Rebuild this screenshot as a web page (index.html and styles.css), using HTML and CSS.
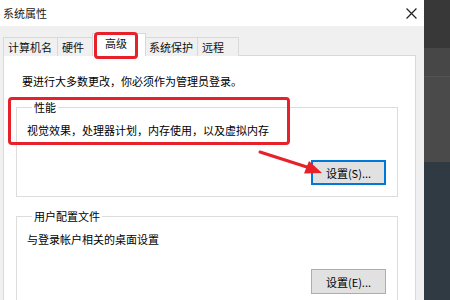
FILE: index.html
```html
<!DOCTYPE html>
<html lang="zh-CN">
<head>
<meta charset="UTF-8" />
<title>系统属性</title>
<link rel="stylesheet" href="styles.css">
</head>
<body>
  <div class="dialog">
    <div class="titlebar">
      <span class="title">系统属性</span>
      <svg class="close" viewBox="0 0 10 10" width="11" height="11">
        <path d="M0.5 0.5 L9.5 9.5 M9.5 0.5 L0.5 9.5" stroke="#222" stroke-width="1.1" fill="none"/>
      </svg>
    </div>

    <div class="tabs">
      <div class="tab">计算机名</div>
      <div class="tab">硬件</div>
      <div class="tab active">高级</div>
      <div class="tab">系统保护</div>
      <div class="tab">远程</div>
    </div>

    <div class="panel">
      <p class="notice">要进行大多数更改，你必须作为管理员登录。</p>

      <fieldset class="group">
        <legend>性能</legend>
        <p class="desc">视觉效果，处理器计划，内存使用，以及虚拟内存</p>
        <div class="actions"><button class="btn focused">设置(S)...</button></div>
      </fieldset>

      <fieldset class="group">
        <legend>用户配置文件</legend>
        <p class="desc">与登录帐户相关的桌面设置</p>
        <div class="actions"><button class="btn">设置(E)...</button></div>
      </fieldset>
    </div>

    <!-- annotations drawn on top of the screenshot -->
    <div class="mark mark-tab"></div>
    <div class="mark mark-perf"></div>
    <svg class="arrow" viewBox="0 0 70 30" width="70" height="30">
      <line x1="2" y1="4" x2="52" y2="20" stroke="#e8202a" stroke-width="3" stroke-linecap="round"/>
      <polygon points="64,25 46,25.5 51,13" fill="#e8202a"/>
    </svg>
  </div>

  <div class="backdrop">
    <div class="band b1"></div>
    <div class="band b2"></div>
    <div class="band b3"></div>
    <div class="band b4"></div>
  </div>
</body>
</html>
```

FILE: styles.css
```css
* {
  box-sizing: border-box;
}
html, body {
  margin: 0;
  padding: 0;
}
body {
  width: 450px;
  height: 300px;
  overflow: hidden;
  display: flex;
  font-family: "Noto Sans CJK SC", "Noto Sans", sans-serif;
  font-size: 11px;
  color: #000;
}

.dialog {
  position: relative;
  width: 424px;
  height: 300px;
  background: #f0f0f0;
  display: flex;
  flex-direction: column;
}

.titlebar {
  height: 26px;
  flex: none;
  background: #fff;
  display: flex;
  align-items: center;
  justify-content: space-between;
  padding: 0 7px 0 3px;
}
.title {
  color: #1a1a1a;
}

/* Tabs */
.tabs {
  flex: none;
  height: 30px;
  display: flex;
  align-items: flex-end;
  padding-left: 3px;
  margin-bottom: -1px;
  position: relative;
  z-index: 1;
}
.tab {
  height: 19px;
  line-height: 18px;
  padding: 0 4px;
  white-space: nowrap;
  border: 1px solid #d9d9d9;
  border-bottom: none;
  border-right: none;
  background: #f0f0f0;
  color: #111;
}
.tab:nth-child(1) { width: 54px; }
.tab:nth-child(2) { width: 36px; }
.tab:nth-child(4) { width: 52px; border-left: none; }
.tab:nth-child(5) { width: 42px; border-right: 1px solid #d9d9d9; }
.tab.active {
  width: 54px;
  height: 23px;
  margin: 0 -1px 0 -1px;
  background: #fff;
  border-right: 1px solid #d9d9d9;
  padding-left: 12px;
  line-height: 19px;
  position: relative;
}

.panel {
  flex: 1;
  margin: 0 8px 0 3px;
  background: #fff;
  border: 1px solid #d9d9d9;
  border-bottom: none;
  padding: 16px 17px 0 12px;
}
.notice {
  margin: 0 0 0 6px;
  line-height: 18px;
}

.group {
  margin: 10px 0 0 0;
  border: 1px solid #dcdcdc;
  padding: 7px 10px 11px 10px;
  min-width: 0;
}
.group + .group {
  margin-top: 12px;
}
.group legend {
  padding: 0 2px;
  margin-left: 5px;
  line-height: 15px;
}
.desc {
  margin: 0;
  line-height: 16px;
}
.actions {
  display: flex;
  justify-content: flex-end;
  margin-top: 22px;
}
.btn {
  width: 75px;
  height: 25px;
  font: inherit;
  color: #000;
  background: #e1e1e1;
  border: 1px solid #adadad;
  padding: 0;
  margin-right: 1px;
}
.btn.focused {
  border: 2px solid #0078d7;
}

/* red annotation boxes */
.mark {
  position: absolute;
  border: 3px solid #e8202a;
  border-radius: 4px;
  z-index: 2;
}
.mark-tab {
  left: 94px;
  top: 32px;
  width: 44px;
  height: 27px;
}
.mark-perf {
  left: 8px;
  top: 97px;
  width: 282px;
  height: 48px;
}
.arrow {
  position: absolute;
  left: 258px;
  top: 148px;
  z-index: 2;
}

/* desktop behind the dialog */
.backdrop {
  flex: 1;
  display: flex;
  flex-direction: column;
}
.band.b1 { height: 48px; background: #383838; }
.band.b2 { height: 29px; background: #474747; border-bottom: 1px solid #525252; }
.band.b3 { height: 85px; background: #4a4a4a; }
.band.b4 { flex: 1; background: #2f3a43; }
```
